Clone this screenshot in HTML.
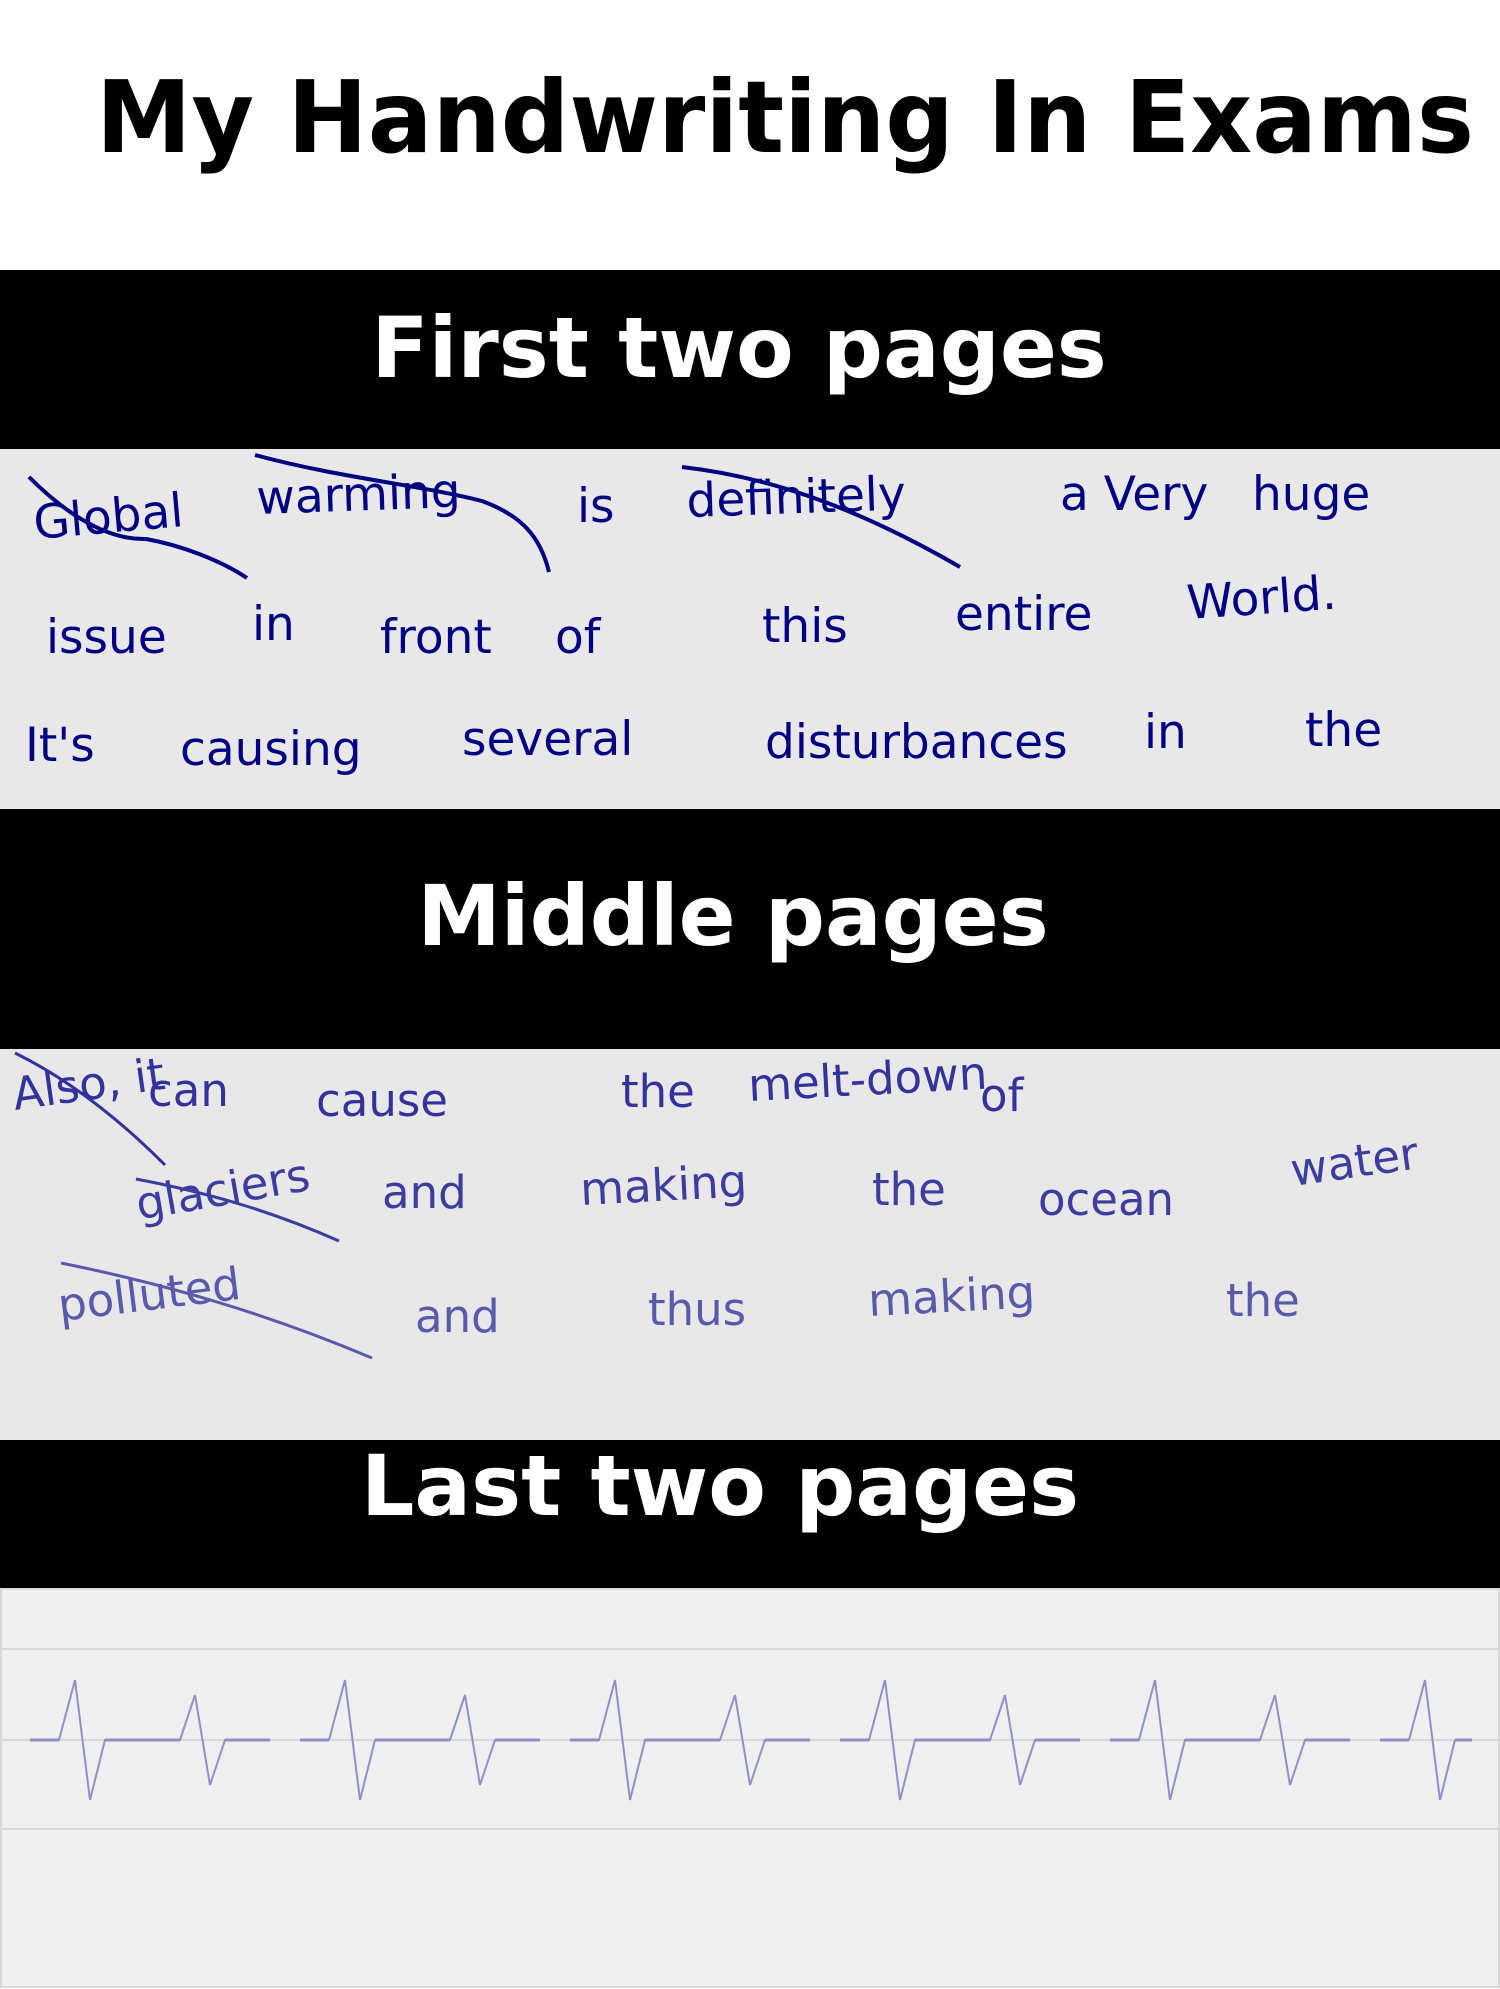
<!DOCTYPE html>
<html><head><meta charset="utf-8"><style>
html,body{margin:0;padding:0;background:#fff;width:1500px;height:1989px;overflow:hidden;font-family:"DejaVu Sans","Liberation Sans",sans-serif}
</style></head><body>
<svg width="1500" height="1989" viewBox="0 0 1500 1989" xmlns="http://www.w3.org/2000/svg" style="display:block;font-family:'DejaVu Sans','Liberation Sans',sans-serif">
<rect width="1500" height="1989" fill="#fff"/>
<text x="96" y="152" font-size="100" font-weight="bold" fill="#000" textLength="1378" lengthAdjust="spacingAndGlyphs">My Handwriting In Exams</text>
<rect x="0" y="270" width="1500" height="179" fill="#000"/>
<text x="739" y="377" font-size="84" font-weight="bold" fill="#fff" text-anchor="middle">First two pages</text>
<rect x="0" y="449" width="1500" height="360" fill="#e8e8e8"/>
<g font-size="47" fill="#000080">
<text transform="translate(35,539) rotate(-5)">Global</text>
<text transform="translate(257,514) rotate(-2)">warming</text>
<text x="577" y="522">is</text>
<text transform="translate(687,517) rotate(-2)">definitely</text>
<text x="1060" y="510">a Very</text>
<text x="1252" y="510">huge</text>
<text x="46" y="653">issue</text>
<text x="252" y="640">in</text>
<text x="380" y="653">front</text>
<text x="555" y="653">of</text>
<text x="762" y="642">this</text>
<text x="955" y="630">entire</text>
<text transform="translate(1188,619) rotate(-4)">World.</text>
<text x="25" y="761">It's</text>
<text x="180" y="765">causing</text>
<text x="462" y="755">several</text>
<text x="765" y="758">disturbances</text>
<text x="1144" y="748">in</text>
<text x="1305" y="746">the</text>
</g>
<g fill="none" stroke="#000080" stroke-width="4">
<path d="M29,477 C70,518 110,540 146,539 C180,545 220,560 247,578"/>
<path d="M255,455 C340,478 420,485 482,501 C520,515 540,535 549,572"/>
<path d="M682,467 C780,478 870,515 960,567"/>
</g>
<rect x="0" y="809" width="1500" height="240" fill="#000"/>
<text x="733" y="945" font-size="84" font-weight="bold" fill="#fff" text-anchor="middle">Middle pages</text>
<rect x="0" y="1049" width="1500" height="391" fill="#e8e8e8"/>
<g font-size="45" fill="#333399">
<text transform="translate(15,1110) rotate(-8)">Also, it</text>
<text x="148" y="1106">can</text>
<text x="316" y="1116">cause</text>
<text x="621" y="1107">the</text>
<text transform="translate(749,1101) rotate(-3)">melt-down</text>
<text x="980" y="1111">of</text>
</g>
<g font-size="45" fill="#3d3d9e">
<text transform="translate(139,1220) rotate(-10)">glaciers</text>
<text x="382" y="1208">and</text>
<text transform="translate(581,1205) rotate(-3)">making</text>
<text x="872" y="1205">the</text>
<text x="1038" y="1215">ocean</text>
<text transform="translate(1293,1186) rotate(-8)">water</text>
</g>
<g font-size="45" fill="#5a5aaa">
<text transform="translate(60,1321) rotate(-7)">polluted</text>
<text x="415" y="1332">and</text>
<text x="648" y="1325">thus</text>
<text transform="translate(869,1316) rotate(-3)">making</text>
<text x="1226" y="1316">the</text>
</g>
<g fill="none" stroke-width="3">
<path d="M15,1053 C70,1080 120,1120 165,1165" stroke="#333399"/>
<path d="M136,1179 C220,1195 280,1215 339,1241" stroke="#3d3d9e"/>
<path d="M61,1263 C170,1285 270,1315 372,1358" stroke="#5a5aaa"/>
</g>
<rect x="0" y="1440" width="1500" height="148" fill="#000"/>
<text x="720" y="1515" font-size="84" font-weight="bold" fill="#fff" text-anchor="middle">Last two pages</text>
<rect x="1" y="1589" width="1498" height="398" fill="#f0f0f0" stroke="#d8d8d8" stroke-width="2"/>
<line x1="0" y1="1649" x2="1500" y2="1649" stroke="#d8d8d8" stroke-width="2"/>
<line x1="0" y1="1740" x2="1500" y2="1740" stroke="#d8d8d8" stroke-width="2"/>
<line x1="0" y1="1829" x2="1500" y2="1829" stroke="#d8d8d8" stroke-width="2"/>
<defs>
<g id="ecg">
<path d="M30,1740 H59 M105,1740 H180 M225,1740 H270" stroke="#c0c0d8" stroke-width="4" fill="none"/>
<path d="M30,1740 H59 L75,1680 L90,1800 L105,1740 H180 L195,1695 L210,1785 L225,1740 H270" stroke="#9090c8" stroke-width="2" fill="none"/>
</g>
<clipPath id="c"><rect x="0" y="1600" width="1472" height="300"/></clipPath>
</defs>
<g clip-path="url(#c)">
<use href="#ecg"/>
<use href="#ecg" x="270"/>
<use href="#ecg" x="540"/>
<use href="#ecg" x="810"/>
<use href="#ecg" x="1080"/>
<use href="#ecg" x="1350"/>
</g>
</svg>
</body></html>
